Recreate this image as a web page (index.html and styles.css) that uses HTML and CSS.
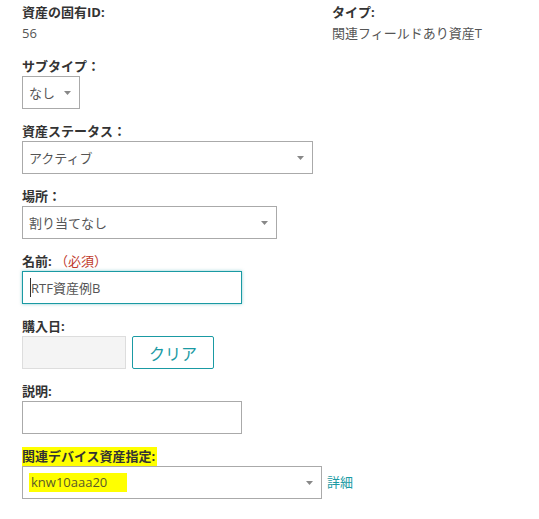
FILE: index.html
```html
<!DOCTYPE html>
<html lang="ja">
<head>
    <meta charset="UTF-8">
    <title>資産の編集</title>
    <link rel="stylesheet" href="styles.css">
</head>
<body>
    <div class="form">
        <!-- ID / type -->
        <div class="top-row">
            <div class="col-id">
                <label>資産の固有ID:</label>
                <div class="value">56</div>
            </div>
            <div class="col-type">
                <label>タイプ:</label>
                <div class="value">関連フィールドあり資産T</div>
            </div>
        </div>

        <div class="field">
            <label>サブタイプ：</label>
            <div class="select w-subtype">
                <span>なし</span>
                <svg class="arrow" width="7" height="4" viewBox="0 0 7 4"><path d="M0 0H7L3.5 4Z"/></svg>
            </div>
        </div>

        <div class="field">
            <label>資産ステータス：</label>
            <div class="select w-status">
                <span>アクティブ</span>
                <svg class="arrow" width="7" height="4" viewBox="0 0 7 4"><path d="M0 0H7L3.5 4Z"/></svg>
            </div>
        </div>

        <div class="field">
            <label>場所：</label>
            <div class="select w-location">
                <span>割り当てなし</span>
                <svg class="arrow" width="7" height="4" viewBox="0 0 7 4"><path d="M0 0H7L3.5 4Z"/></svg>
            </div>
        </div>

        <div class="field">
            <label>名前: <span class="required">（必須）</span></label>
            <div class="input focused w-name"><span class="caret"></span>RTF資産例B</div>
        </div>

        <div class="field">
            <label>購入日:</label>
            <div class="date-row">
                <div class="input date"></div>
                <button class="btn-clear">クリア</button>
            </div>
        </div>

        <div class="field">
            <label>説明:</label>
            <div class="input w-name"></div>
        </div>

        <div class="field">
            <label><span class="marker">関連デバイス資産指定:</span></label>
            <div class="device-row">
                <div class="select w-device">
                    <span class="marker-value">knw10aaa20</span>
                    <svg class="arrow" width="7" height="4" viewBox="0 0 7 4"><path d="M0 0H7L3.5 4Z"/></svg>
                </div>
                <a class="detail-link">詳細</a>
            </div>
        </div>
    </div>
</body>
</html>
```

FILE: styles.css
```css
* {
    margin: 0;
    padding: 0;
    box-sizing: border-box;
}

body {
    font-family: 'Open Sans', 'Noto Sans CJK JP', sans-serif;
    font-size: 13px;
    color: #333;
    background: #fff;
}

.form {
    padding: 2px 0 0 22px;
}

label {
    display: block;
    line-height: 20px;
    font-weight: bold;
    color: #333;
}

.value {
    line-height: 22px;
    color: #555;
}

/* ID and type side by side */
.top-row {
    display: flex;
}

.col-id {
    width: 310px;
}

.field {
    margin-top: 12px;
}

.required {
    font-weight: normal;
    color: #c0392b;
}

/* Select boxes */
.select {
    height: 33px;
    border: 1px solid #aaa;
    display: flex;
    align-items: center;
    justify-content: space-between;
    padding: 0 8px 0 6px;
    color: #555;
    background: #fff;
}

.select .arrow {
    fill: #888;
    flex-shrink: 0;
}

.w-subtype { width: 58px; }
.w-status { width: 291px; }
.w-location { width: 255px; }
.w-device { width: 300px; }
.w-name { width: 220px; }

/* Text inputs */
.input {
    height: 33px;
    border: 1px solid #aaa;
    display: flex;
    align-items: center;
    padding: 0 7px;
    color: #555;
    background: #fff;
}

.input.focused {
    border-color: #1a9aa3;
    box-shadow: 0 0 3px rgba(26, 154, 163, 0.5);
}

.caret {
    display: inline-block;
    width: 0;
    height: 19px;
    border-left: 1px solid #333;
}

.date-row {
    display: flex;
    gap: 6px;
}

.input.date {
    width: 104px;
    background: #f4f4f4;
    border-color: #ddd;
}

.btn-clear {
    width: 82px;
    height: 33px;
    border: 1px solid #1a9aa3;
    border-radius: 2px;
    background: #fff;
    color: #1a9aa3;
    font-family: inherit;
    font-size: 16px;
}

/* Device assignment */
.device-row {
    display: flex;
    align-items: center;
    gap: 5px;
}

.detail-link {
    color: #1a9aa3;
    margin-top: -2px;
}

.marker {
    background: #ffff00;
    padding: 0 2px 1px 0;
}

.marker-value {
    background: #ffff00;
    padding: 0 20px 1px 2px;
    margin-left: 0;
    color: #5a5a2a;
}
```
